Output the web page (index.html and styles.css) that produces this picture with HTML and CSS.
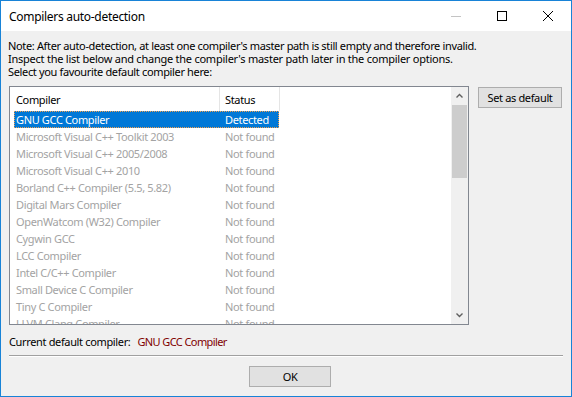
FILE: index.html
```html
<!DOCTYPE html>
<html>
<head>
<meta charset="utf-8">
<link rel="stylesheet" href="styles.css">
</head>
<body>
<div class="window">
  <div class="titlebar">
    <span class="title">Compilers auto-detection</span>
    <div class="controls">
      <span class="ctl"><svg width="10" height="10" viewBox="0 0 10 10"><line x1="0" y1="5.5" x2="10" y2="5.5" stroke="#c4c4c4" stroke-width="1"/></svg></span>
      <span class="ctl"><svg width="10" height="10" viewBox="0 0 10 10"><rect x="0.5" y="0.5" width="9" height="9" fill="none" stroke="#000" stroke-width="1"/></svg></span>
      <span class="ctl"><svg width="10" height="10" viewBox="0 0 10 10"><path d="M0 0L10 10M10 0L0 10" stroke="#000" stroke-width="1" fill="none"/></svg></span>
    </div>
  </div>
  <div class="body">
    <p class="note"><span>Note: After auto-detection, at least one compiler's master path is still empty and therefore invalid.</span><br><span class="wide">Inspect the list below and change the compiler's master path later in the compiler options.</span><br><span>Select you favourite default compiler here:</span></p>
    <div class="main">
      <div class="list">
        <div class="list-inner">
          <div class="header">
            <div class="hcol c1">Compiler</div>
            <div class="hcol c2">Status</div>
          </div>
          <div class="row sel"><span class="n">GNU GCC Compiler</span><span class="s">Detected</span></div>
          <div class="row"><span class="n">Microsoft Visual C++ Toolkit 2003</span><span class="s">Not found</span></div>
          <div class="row"><span class="n">Microsoft Visual C++ 2005/2008</span><span class="s">Not found</span></div>
          <div class="row"><span class="n">Microsoft Visual C++ 2010</span><span class="s">Not found</span></div>
          <div class="row"><span class="n">Borland C++ Compiler (5.5, 5.82)</span><span class="s">Not found</span></div>
          <div class="row"><span class="n">Digital Mars Compiler</span><span class="s">Not found</span></div>
          <div class="row"><span class="n">OpenWatcom (W32) Compiler</span><span class="s">Not found</span></div>
          <div class="row"><span class="n">Cygwin GCC</span><span class="s">Not found</span></div>
          <div class="row"><span class="n">LCC Compiler</span><span class="s">Not found</span></div>
          <div class="row"><span class="n">Intel C/C++ Compiler</span><span class="s">Not found</span></div>
          <div class="row"><span class="n">Small Device C Compiler</span><span class="s">Not found</span></div>
          <div class="row"><span class="n">Tiny C Compiler</span><span class="s">Not found</span></div>
          <div class="row"><span class="n">LLVM Clang Compiler</span><span class="s">Not found</span></div>
        </div>
        <div class="scrollbar">
          <div class="arrow"><svg width="7" height="5" viewBox="0 0 7 5"><path d="M0.5 4.5L3.5 1.5L6.5 4.5" stroke="#606060" stroke-width="1.4" fill="none"/></svg></div>
          <div class="track"><div class="thumb"></div></div>
          <div class="arrow"><svg width="7" height="5" viewBox="0 0 7 5"><path d="M0.5 0.5L3.5 3.5L6.5 0.5" stroke="#606060" stroke-width="1.4" fill="none"/></svg></div>
        </div>
      </div>
      <button class="btn set">Set as default</button>
    </div>
    <div class="current"><span>Current default compiler:</span><span class="val">GNU GCC Compiler</span></div>
    <div class="sep"></div>
    <div class="footer"><button class="btn ok">OK</button></div>
  </div>
</div>
</body>
</html>
```
FILE: styles.css
```css
* { box-sizing: border-box; }
body { margin: 0; font-family: "Segoe UI", "Noto Sans", sans-serif; color: #000; }
.window { width: 572px; height: 397px; border: 1px solid #1883d7; display: flex; flex-direction: column; background: #f0f0f0; }
.titlebar { height: 30px; background: #fff; display: flex; align-items: center; }
.title { flex: 1; padding-left: 8px; font-size: 12px; letter-spacing: -0.3px; }
.controls { display: flex; height: 30px; }
.ctl { width: 46px; height: 30px; display: flex; align-items: center; justify-content: center; }
.ctl svg { display: block; }
.body { flex: 1; padding: 0 8px; display: flex; flex-direction: column; font-size: 11px; letter-spacing: -0.35px; }
.note { margin: 8px 0 0 -1px; line-height: 13px; }
.note .wide { letter-spacing: -0.24px; }
.main { display: flex; gap: 9px; margin-top: 8px; align-items: flex-start; }
.list { width: 460px; height: 239px; border: 1px solid #828790; background: #fff; display: flex; }
.list-inner { flex: 1; overflow: hidden; }
.header { display: flex; height: 24px; }
.hcol { border-right: 1px solid #e5e5e5; padding-left: 6px; display: flex; align-items: center; }
.c1 { width: 210px; }
.c2 { width: 60px; padding-left: 5px; }
.row { display: flex; height: 17px; margin-left: 4px; width: 265px; align-items: center; color: #a3a3a3; white-space: nowrap; }
.row .n { width: 205px; padding-left: 2px; }
.row .s { padding-left: 6px; }
.row.sel { background: #0078d7; color: #fff; outline: 1px dotted #f0a050; outline-offset: -1px; }
.scrollbar { width: 17px; background: #f0f0f0; display: flex; flex-direction: column; }
.arrow { height: 17px; display: flex; align-items: center; justify-content: center; }
.arrow svg { display: block; }
.track { flex: 1; }
.thumb { height: 73px; margin: 1px 1px 0; background: #cdcdcd; }
.btn { font: inherit; font-size: 11px; letter-spacing: -0.35px; background: #e1e1e1; border: 1px solid #adadad; color: #000; padding: 0; }
.set { width: 84px; height: 21px; margin-top: 1px; }
.current { margin-top: 10px; line-height: 13px; display: flex; }
.val { color: #800000; margin-left: 7px; letter-spacing: -0.6px; }
.sep { margin-top: 7px; border-top: 1px solid #a0a0a0; border-bottom: 1px solid #fff; }
.footer { display: flex; margin-top: 9px; padding-left: 240px; }
.ok { width: 82px; height: 21px; }
```
